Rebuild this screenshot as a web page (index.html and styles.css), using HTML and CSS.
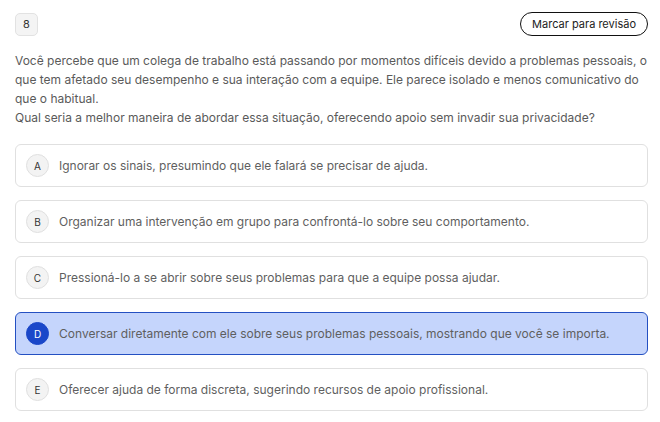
FILE: index.html
```html
<!DOCTYPE html>
<html lang="pt-BR">
<head>
    <meta charset="UTF-8">
    <meta name="viewport" content="width=device-width, initial-scale=1.0">
    <title>Questão 8</title>
    <link rel="stylesheet" href="styles.css">
</head>
<body>
    <div class="question">
        <div class="question-header">
            <span class="question-number">8</span>
            <button class="review-btn">Marcar para revisão</button>
        </div>

        <p class="question-text">
            Você percebe que um colega de trabalho está passando por momentos difíceis devido a problemas pessoais, o que tem afetado seu desempenho e sua interação com a equipe. Ele parece isolado e menos comunicativo do que o habitual.<br>
            Qual seria a melhor maneira de abordar essa situação, oferecendo apoio sem invadir sua privacidade?
        </p>

        <div class="options">
            <div class="option">
                <span class="option-letter">A</span>
                <span class="option-text">Ignorar os sinais, presumindo que ele falará se precisar de ajuda.</span>
            </div>
            <div class="option">
                <span class="option-letter">B</span>
                <span class="option-text">Organizar uma intervenção em grupo para confrontá-lo sobre seu comportamento.</span>
            </div>
            <div class="option">
                <span class="option-letter">C</span>
                <span class="option-text">Pressioná-lo a se abrir sobre seus problemas para que a equipe possa ajudar.</span>
            </div>
            <div class="option selected">
                <span class="option-letter">D</span>
                <span class="option-text">Conversar diretamente com ele sobre seus problemas pessoais, mostrando que você se importa.</span>
            </div>
            <div class="option">
                <span class="option-letter">E</span>
                <span class="option-text">Oferecer ajuda de forma discreta, sugerindo recursos de apoio profissional.</span>
            </div>
        </div>
    </div>
</body>
</html>
```

FILE: styles.css
```css
* {
    margin: 0;
    padding: 0;
    box-sizing: border-box;
}

body {
    font-family: 'Inter', sans-serif;
    background: #fff;
    color: #555;
    padding: 12px 12px 0 15px;
}

.question-header {
    display: flex;
    justify-content: space-between;
    align-items: center;
}

.question-number {
    width: 23px;
    height: 23px;
    display: flex;
    align-items: center;
    justify-content: center;
    background: #f4f4f4;
    border: 1px solid #e2e2e2;
    border-radius: 5px;
    font-size: 11px;
    color: #333;
}

.review-btn {
    font-family: 'Inter', sans-serif;
    background: #fff;
    border: 1px solid #111;
    border-radius: 20px;
    padding: 0 11px;
    height: 24px;
    font-size: 11px;
    color: #222;
    cursor: pointer;
}

.question-text {
    margin-top: 15px;
    font-size: 12px;
    line-height: 19px;
    color: #5a5a5a;
}

.options {
    margin-top: 17px;
    display: flex;
    flex-direction: column;
    gap: 13px;
}

.option {
    display: flex;
    align-items: center;
    height: 43px;
    padding: 0 10px;
    border: 1px solid #e0e0e0;
    border-radius: 6px;
    background: #fff;
}

.option-letter {
    width: 23px;
    height: 23px;
    flex-shrink: 0;
    display: flex;
    align-items: center;
    justify-content: center;
    border-radius: 50%;
    background: #f3f3f3;
    border: 1px solid #e0e0e0;
    font-size: 10px;
    color: #333;
    margin-right: 10px;
}

.option-text {
    font-size: 12px;
    color: #5f5f5f;
}

.option.selected {
    background: #c5d5fc;
    border-color: #2450c2;
}

.option.selected .option-letter {
    background: #1a47c9;
    border-color: #1a47c9;
    color: #fff;
}
```
